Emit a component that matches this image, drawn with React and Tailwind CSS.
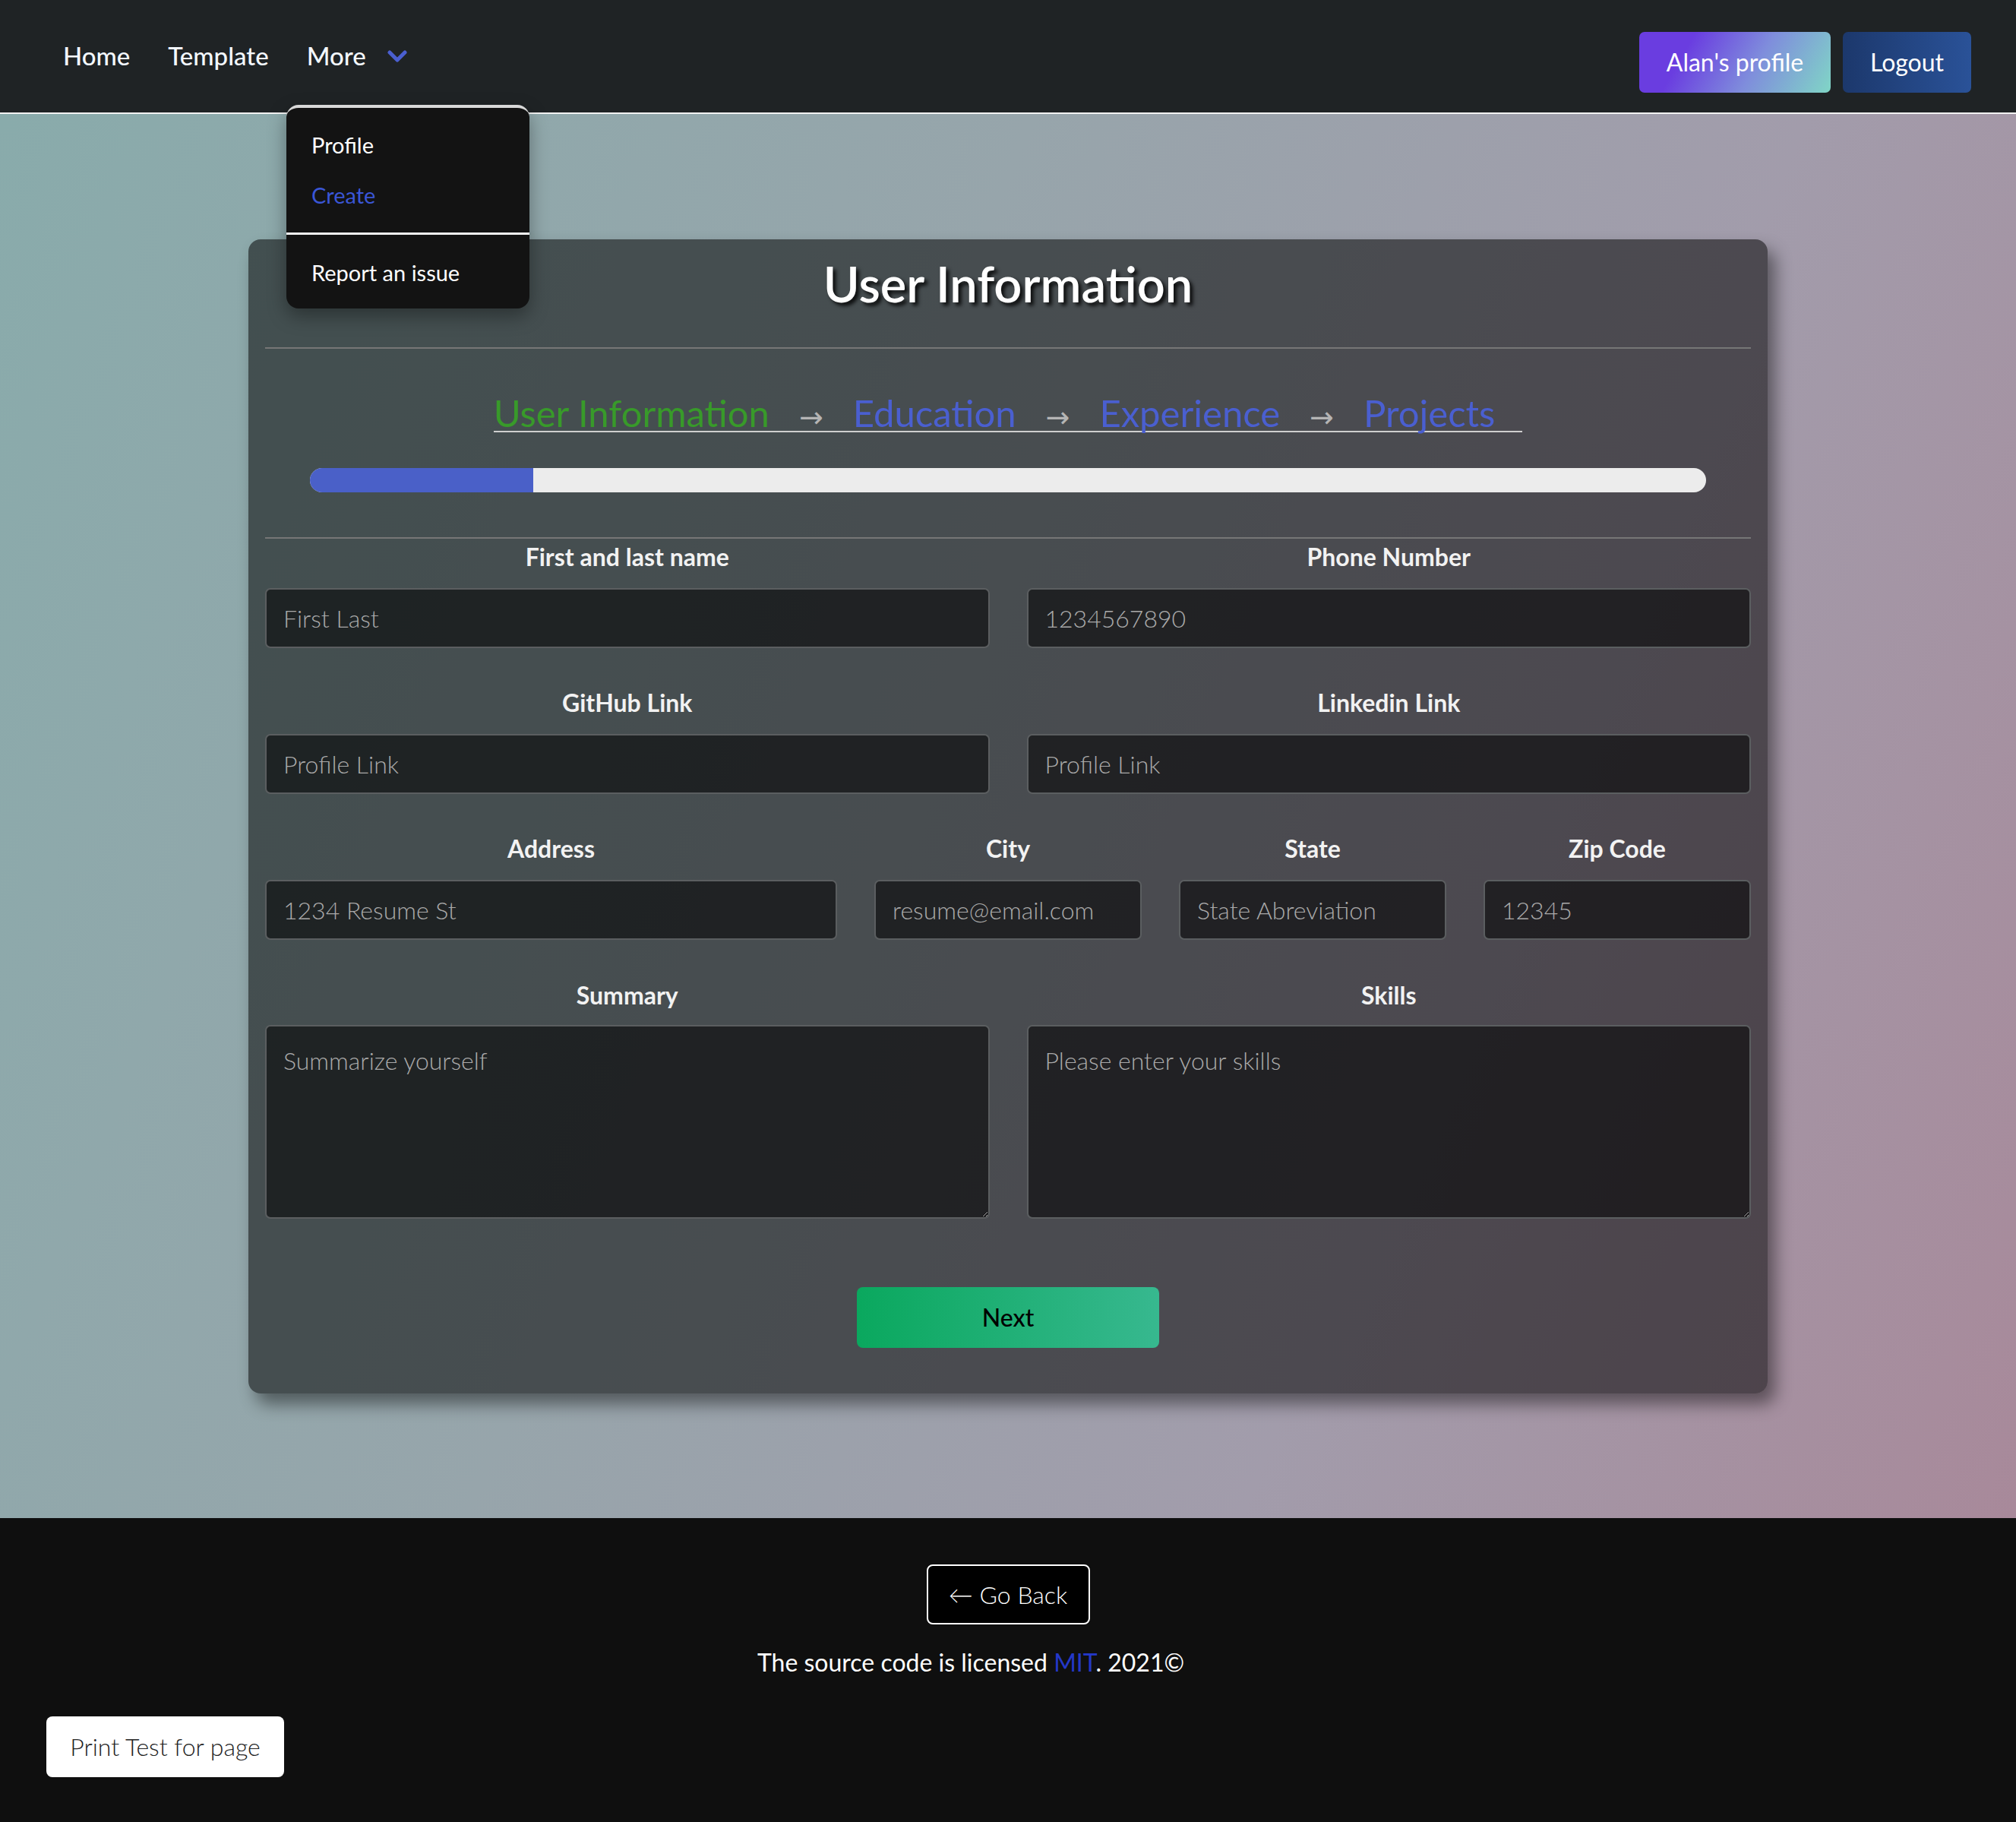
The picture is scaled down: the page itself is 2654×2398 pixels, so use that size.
import React from "react";

function Field({ label, placeholder, className = "" }) {
  return (
    <div className={"flex flex-col " + className}>
      <div className="text-center text-[32px] leading-[38px] font-bold text-[#f2f2f2]">{label}</div>
      <input
        placeholder={placeholder}
        className="mt-[22px] h-[79px] w-full rounded-[7px] border-2 border-[#5b5e60] bg-black/55 px-[22px] text-[32px] font-light text-white outline-none placeholder:text-[#aaaaaa]"
      />
    </div>
  );
}

function Area({ label, placeholder }) {
  return (
    <div className="flex flex-col">
      <div className="text-center text-[32px] leading-[38px] font-bold text-[#f2f2f2]">{label}</div>
      <textarea
        placeholder={placeholder}
        className="mt-[20px] h-[255px] w-full rounded-[7px] border-2 border-[#5b5e60] bg-black/55 px-[22px] pt-[26px] text-[32px] font-light leading-[38px] text-white outline-none placeholder:text-[#aaaaaa]"
      />
    </div>
  );
}

function Arrow() {
  return <span className="font-['DejaVu_Sans',sans-serif] text-[38px] leading-[30px] text-[#b4b4b4]">→</span>;
}

export default function App() {
  return (
    <div className="flex min-h-screen flex-col font-['Lato','Open_Sans',sans-serif]">
      {/* NAVBAR */}
      <nav className="relative z-20 flex h-[150px] items-center justify-between border-b-2 border-[#f2f2f2] bg-[#1f2325] pl-[83px] pr-[59px]">
        <div className="flex items-center gap-[50px] text-[33px] font-medium text-[#f3f8ff]">
          <span>Home</span>
          <span>Template</span>
          <span className="flex items-center">
            More
            <svg className="ml-[28px]" width="26" height="17" viewBox="0 0 26 17">
              <polyline points="3,3 13,13 23,3" fill="none" stroke="#4a5fd0" strokeWidth="5" strokeLinecap="round" strokeLinejoin="round" />
            </svg>
          </span>
        </div>
        <div className="mt-[16px] flex items-center gap-[16px] text-[32px] text-white [text-shadow:2px_3px_4px_rgba(0,0,0,0.9)]">
          <button className="h-[80px] w-[252px] rounded-[7px] bg-[linear-gradient(120deg,#6a3de0_25%,#7f8ddc_60%,#80d6c6_100%)]">
            Alan's profile
          </button>
          <button className="h-[80px] w-[169px] rounded-[7px] bg-[linear-gradient(90deg,#1c386c,#2a5298)]">
            Logout
          </button>
        </div>

        {/* Dropdown */}
        <div className="absolute left-[377px] top-[138px] flex h-[268px] w-[320px] flex-col overflow-hidden rounded-[16px] border-t-4 border-[#d8d8d8] bg-[#131313] text-[29px] leading-[35px] text-white shadow-[0_10px_24px_rgba(0,0,0,0.35)]">
          <span className="ml-[33px] mt-[31px]">Profile</span>
          <span className="ml-[33px] mt-[31px] text-[#3a56d6]">Create</span>
          <div className="mt-[32px] h-[3px] w-full bg-[#f4f4f4]" />
          <span className="ml-[33px] mt-[32px]">Report an issue</span>
        </div>
      </nav>

      {/* MAIN */}
      <main className="flex justify-center bg-[linear-gradient(112deg,#89abab_0%,#97a5ab_40%,#a29cab_70%,#a8899a_100%)] pb-[164px] pt-[165px]">
        <div className="w-[2000px] rounded-[16px] bg-black/[0.53] px-[22px] pb-[60px] pt-[20px] shadow-[10px_14px_22px_rgba(0,0,0,0.45)]">
          <h1 className="text-center text-[65px] font-semibold leading-[77px] text-white [text-shadow:4px_4px_5px_rgba(0,0,0,0.85)]">
            User Information
          </h1>
          <div className="mt-[45px] h-[2px] bg-[#767676]" />

          <div className="mt-[60px] flex justify-center">
            <div className="flex items-baseline gap-[39px] border-b-2 border-[#cfcfcf] pr-[36px] text-[49px] leading-[48px]">
              <span className="text-[#389a2a]">User Information</span>
              <Arrow />
              <span className="text-[#4a5fd0]">Education</span>
              <Arrow />
              <span className="text-[#4a5fd0]">Experience</span>
              <Arrow />
              <span className="text-[#4a5fd0]">Projects</span>
            </div>
          </div>

          <div className="mx-[59px] mt-[47px] h-[32px] overflow-hidden rounded-full bg-[#ececec]">
            <div className="h-full bg-[#4a60c8]" style={{ width: "16%" }} />
          </div>

          <div className="mt-[59px] h-[2px] bg-[#767676]" />

          <div className="mt-[5px] grid grid-cols-2 gap-x-[49px] gap-y-[53px]">
            <Field label="First and last name" placeholder="First Last" />
            <Field label="Phone Number" placeholder="1234567890" />
            <Field label="GitHub Link" placeholder="Profile Link" />
            <Field label="Linkedin Link" placeholder="Profile Link" />
          </div>

          <div className="mt-[53px] grid grid-cols-5 gap-x-[49px]">
            <Field label="Address" placeholder="1234 Resume St" className="col-span-2" />
            <Field label="City" placeholder="resume@email.com" />
            <Field label="State" placeholder="State Abreviation" />
            <Field label="Zip Code" placeholder="12345" />
          </div>

          <div className="mt-[54px] grid grid-cols-2 gap-x-[49px]">
            <Area label="Summary" placeholder="Summarize yourself" />
            <Area label="Skills" placeholder="Please enter your skills" />
          </div>

          <div className="mt-[90px] flex justify-center">
            <button className="h-[80px] w-[398px] rounded-[8px] bg-[linear-gradient(90deg,#0aa85e,#37b88f)] text-[32px] font-medium text-black">
              Next
            </button>
          </div>
        </div>
      </main>

      {/* FOOTER */}
      <footer className="flex flex-col bg-[#0f0f0f] pb-[60px] pt-[61px]">
        <div className="flex justify-center">
          <button className="h-[79px] w-[215px] rounded-[8px] border-2 border-white bg-black text-[32px] font-light text-white">
            ← Go Back
          </button>
        </div>
        <p className="mt-[31px] pr-[98px] text-center text-[32px] leading-[38px] text-white">
          The source code is licensed <span className="text-[#2438c8]">MIT</span>. 2021©
        </p>
        <div className="mt-[52px] pl-[61px]">
          <button className="h-[80px] w-[313px] rounded-[8px] bg-white text-[32px] font-light text-[#222]">
            Print Test for page
          </button>
        </div>
      </footer>
    </div>
  );
}
